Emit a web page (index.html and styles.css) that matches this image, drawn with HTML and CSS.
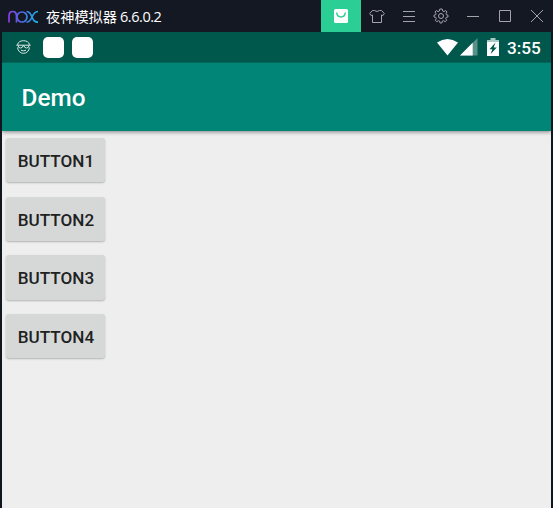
FILE: index.html
```html
<!DOCTYPE html>
<html lang="zh-CN">
<head>
<meta charset="utf-8">
<title>夜神模拟器</title>
<link rel="stylesheet" href="styles.css">
</head>
<body>
<div class="window">
  <header class="titlebar">
    <svg class="logo" width="31" height="14" viewBox="0 0 31 14" fill="none" stroke-width="1.7">
      <defs>
        <linearGradient id="brand" gradientUnits="userSpaceOnUse" x1="0" y1="0" x2="30" y2="0">
          <stop offset="0" stop-color="#8c3be0"/>
          <stop offset="0.5" stop-color="#4b6fe6"/>
          <stop offset="1" stop-color="#16b9e8"/>
        </linearGradient>
      </defs>
      <g stroke="url(#brand)">
        <path d="M1 12.500V6C1 3 2.500 1.500 4.700 1.500S8.500 3 8.500 6V12.500"/>
        <circle cx="14" cy="7" r="5"/>
        <path d="M18.500 1.500C21.500 1.500 22.500 3.500 24 7S26.500 12.200 30 12.200M30 1.500C27 1.500 25.500 3.500 24 7S21.500 12.200 18.500 12.200"/>
      </g>
    </svg>
    <span class="product">夜神模拟器</span><span class="version">6.6.0.2</span>
    <nav class="tools">
      <span class="tool store">
        <svg width="14" height="14" viewBox="0 0 14 14"><rect width="14" height="14" rx="1.500" fill="#fff"/><path d="M2.700 3.500C3.300 9.500 10.700 9.500 11.300 3.500" fill="none" stroke="#2bcf96" stroke-width="1.500"/></svg>
      </span>
      <span class="tool">
        <svg width="16" height="16" viewBox="0 0 16 16"><path d="M5.500 2.500L3.500 2.500L.7 5.500L2 7.500L3.500 7V14.500H12.500V7L14 7.500L15.300 5.500L12.500 2.500H10.500Q8 4.500 5.500 2.500Z"/></svg>
      </span>
      <span class="tool">
        <svg width="16" height="16" viewBox="0 0 16 16"><path d="M2 3.500H14M2 8.500H14M2 13.500H14"/></svg>
      </span>
      <span class="tool">
        <svg width="16" height="16" viewBox="0 0 16 16"><path d="M6.800 1H9.200L9.700 3L11 3.600L12.700 2.500L14 4L13 5.700L13.300 6.700L15 7.200V8.900L13.200 9.400L12.700 10.600L13.700 12.300L12.200 13.700L10.500 12.700L9.400 13.100L8.900 15H7.100L6.600 13.100L5.500 12.700L3.800 13.700L2.300 12.300L3.300 10.600L2.800 9.400L1 8.900V7.200L2.700 6.700L3 5.700L2 4L3.300 2.500L5 3.600L6.300 3Z"/><circle cx="8" cy="8" r="2.500"/></svg>
      </span>
      <span class="tool">
        <svg width="16" height="16" viewBox="0 0 16 16"><path d="M2 8.500H14"/></svg>
      </span>
      <span class="tool">
        <svg width="16" height="16" viewBox="0 0 16 16"><path d="M2.500 2.500H13.500V13.500H2.500Z"/></svg>
      </span>
      <span class="tool">
        <svg width="16" height="16" viewBox="0 0 16 16"><path d="M2 2L14 14M14 2L2 14"/></svg>
      </span>
    </nav>
  </header>
  <main class="screen">
    <div class="statusbar">
      <svg class="face" width="15" height="14" viewBox="0 0 15 14" fill="none" stroke="#d9e8e5">
        <path d="M1.500 4.800C2 2 4.500.7 7.500.7S13 2 13.500 4.800M1.500 7.500C2 11.200 4.500 13.300 7.500 13.300S13 11.200 13.500 7.500M5 10.200Q7.500 11.500 10 10.200"/>
        <path d="M.3 5.200H14.700M2 5.200Q2 8 4.500 8Q6.700 8 7 5.700H8Q8.300 8 10.500 8Q13 8 13 5.200"/>
      </svg>
      <span class="notice"></span>
      <span class="notice"></span>
      <div class="system">
        <svg width="21" height="17" viewBox="0 0 21 17"><path d="M0 3.500Q10.500-3.500 21 3.500L10.500 16.500Z" fill="#fff"/></svg>
        <svg class="signal" width="18" height="18" viewBox="0 0 18 18"><path d="M0 17.500L17.500 0V17.500Z" fill="#fff" fill-opacity=".35"/><path d="M0 17.500L12.700 4.800V17.500Z" fill="#fff"/></svg>
        <svg class="battery" width="12" height="18" viewBox="0 0 12 18"><path d="M3.500 0H8.500V2H12V4H0V2H3.500Z" fill="#a9c9c4"/><path d="M0 4H12V18H0Z" fill="#fff"/><path d="M8.500 4.500L2.500 11.200H5.300L3.700 16L9.800 9.500H6.700Z" fill="#00574b"/></svg>
        <span class="clock">3:55</span>
      </div>
    </div>
    <div class="appbar">Demo</div>
    <div class="content">
      <button class="btn">BUTTON1</button>
      <button class="btn">BUTTON2</button>
      <button class="btn">BUTTON3</button>
      <button class="btn">BUTTON4</button>
    </div>
  </main>
</div>
</body>
</html>
```
FILE: styles.css
```css
* {
  box-sizing: border-box;
}

body {
  margin: 0;
  font-family: Roboto, "Noto Sans CJK SC", sans-serif;
}

svg {
  display: block;
  flex: none;
}

.window {
  height: 508px;
  display: flex;
  flex-direction: column;
  overflow: hidden;
  background: #111520;
}

.titlebar {
  height: 32px;
  flex: none;
  display: flex;
  align-items: center;
  padding-left: 8px;
  background: #141822;
  color: #fff;
  white-space: nowrap;
}

.logo {
  margin-top: 1px;
}

.product {
  margin-left: 7px;
  width: 74px;
  font: 14.2px/20px "Noto Sans CJK SC", sans-serif;
}

.version {
  padding-top: 1px;
  font: 14.5px/20px "Open Sans", "Noto Sans", sans-serif;
  letter-spacing: -0.45px;
}

.tools {
  display: flex;
  margin-left: auto;
}

.tool {
  width: 32px;
  height: 32px;
  display: grid;
  place-items: center;
  fill: none;
  stroke: #a3a5ab;
  stroke-width: 1;
}

.store {
  width: 40px;
  background: #2bcf96;
  stroke: none;
}

.screen {
  flex: 1;
  display: flex;
  flex-direction: column;
  margin: 0 2px;
  background: #eee;
}

.statusbar {
  height: 31px;
  flex: none;
  display: flex;
  align-items: center;
  padding: 0 9px 0 14px;
  border-bottom: 1px solid #00665a;
  background: #00574b;
}

.notice {
  width: 21px;
  height: 21px;
  margin-left: 8px;
  border-radius: 5px;
  background: #fff;
}

.face {
  margin-right: 4px;
}

.system {
  margin-left: auto;
  display: flex;
  align-items: center;
}

.signal {
  margin-left: 2px;
}

.battery {
  margin-left: 9px;
}

.clock {
  width: 35px;
  margin-left: 8px;
  padding-top: 1px;
  color: #fff;
  font-size: 17.2px;
  font-weight: 500;
  line-height: 20px;
}

.appbar {
  height: 68px;
  flex: none;
  display: flex;
  align-items: center;
  padding: 0 0 0 19.6px;
  background: #008577;
  box-shadow: 0 1px 4px rgba(0, 0, 0, 0.45);
  clip-path: inset(0 0 -8px 0);
  color: #fff;
  font-size: 24.3px;
  font-weight: 500;
}

.content {
  display: flex;
  flex-direction: column;
  align-items: flex-start;
  gap: 14.6px;
  padding: 6.8px 4.3px;
}

.btn {
  width: 98.4px;
  height: 44.2px;
  padding: 2px 0 0 1px;
  border: 0;
  border-radius: 3px;
  background: #d6d8d7;
  box-shadow: 0 1px 2px rgba(0, 0, 0, 0.26);
  color: #202121;
  font: 500 17.1px/20px Roboto, sans-serif;
}
```
